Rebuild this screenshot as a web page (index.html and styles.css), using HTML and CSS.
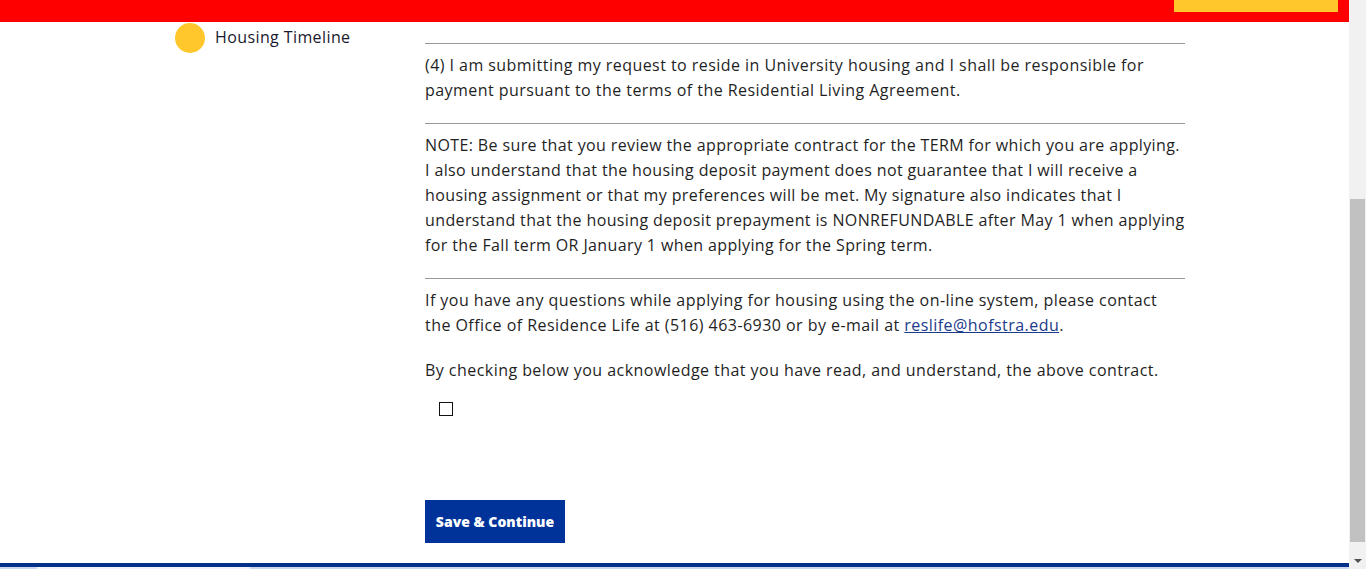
FILE: index.html
```html
<!DOCTYPE html>
<html lang="en">
<head>
<meta charset="utf-8">
<title>Housing Application</title>
<link rel="stylesheet" href="styles.css">
</head>
<body>
<div class="viewport">
  <div class="page">
    <header class="topbar">
      <div class="topbar-btn"></div>
    </header>
    <div class="main">
      <aside class="sidebar">
        <div class="step">
          <span class="dot"></span>
          <span class="step-label">Housing Timeline</span>
        </div>
      </aside>
      <section class="content">
        <hr class="rule">
        <p>(4) I am submitting my request to reside in University housing and I shall be responsible for payment pursuant to the terms of the Residential Living Agreement.</p>
        <hr class="rule">
        <p class="note">NOTE: Be sure that you review the appropriate contract for the TERM for which you are applying. I also understand that the housing deposit payment does not guarantee that I will receive a housing assignment or that my preferences will be met. My signature also indicates that I understand that the housing deposit prepayment is NONREFUNDABLE after May 1 when applying for the Fall term OR January 1 when applying for the Spring term.</p>
        <hr class="rule">
        <p>If you have any questions while applying for housing using the on-line system, please contact the Office of Residence Life at (516) 463-6930 or by e-mail at <a href="#">reslife@hofstra.edu</a>.</p>
        <p>By checking below you acknowledge that you have read, and understand, the above contract.</p>
        <div class="check-row"><span class="checkbox"></span></div>
        <button class="save-btn" type="button">Save &amp; Continue</button>
      </section>
    </div>
    <footer class="footer">
      <div class="footer-band"></div>
      <div class="footer-strip"><span class="footer-box"></span></div>
    </footer>
  </div>
  <div class="scrollbar">
    <div class="scroll-thumb"></div>
    <div class="scroll-arrow"></div>
  </div>
</div>
</body>
</html>
```

FILE: styles.css
```css
html, body {
  margin: 0;
  padding: 0;
  height: 569px;
  overflow: hidden;
  background: #ffffff;
}
body {
  font-family: "Open Sans", "Liberation Sans", sans-serif;
  color: #1f1f1f;
}
.viewport {
  display: flex;
  height: 569px;
}
.page {
  flex: 1;
  display: flex;
  flex-direction: column;
  min-width: 0;
}
.topbar {
  height: 22px;
  background: #ff0000;
  display: flex;
  justify-content: flex-end;
  align-items: flex-start;
  padding-right: 11px;
  flex-shrink: 0;
}
.topbar-btn {
  width: 164px;
  height: 12px;
  background: #ffc72c;
}
.main {
  flex: 1;
  display: flex;
}
.sidebar {
  width: 175px;
  padding-left: 175px;
}
.step {
  display: flex;
  align-items: center;
  gap: 10px;
  margin-top: 1px;
}
.dot {
  width: 30px;
  height: 30px;
  border-radius: 50%;
  background: #ffc72c;
  flex-shrink: 0;
}
.step-label {
  font-size: 16px;
  letter-spacing: 0.4px;
  color: #1a1a2e;
  white-space: nowrap;
  position: relative;
  top: -1px;
}
.content {
  margin-left: 75px;
  width: 760px;
  padding-top: 21px;
  font-size: 16px;
  line-height: 25px;
  letter-spacing: 0.45px;
}
.rule {
  border: 0;
  border-top: 1px solid #999999;
  margin: 0 0 9px 0;
  height: 0;
}
.content p {
  margin: 0 0 20px 0;
}
.content p.note {
  letter-spacing: 0.38px;
}
.content a {
  color: #1b3a8a;
  text-decoration: underline;
}
.check-row {
  padding-left: 14px;
  margin-top: -1px;
  height: 15px;
}
.checkbox {
  display: block;
  width: 12px;
  height: 12px;
  border: 1px solid #111;
  background: #fff;
}
.save-btn {
  margin-top: 83px;
  width: 140px;
  height: 43px;
  background: #00339a;
  color: #ffffff;
  border: 0;
  font-family: "Open Sans", "Liberation Sans", sans-serif;
  font-weight: 800;
  font-size: 14px;
  letter-spacing: 0;
  padding: 0;
}
.footer {
  flex-shrink: 0;
}
.footer-band {
  height: 4px;
  background: #003087;
}
.footer-strip {
  height: 2px;
  background: #c9d8f2;
  padding-left: 37px;
}
.footer-box {
  display: block;
  width: 213px;
  height: 2px;
  background: #eef3fb;
}
.scrollbar {
  width: 17px;
  background: #f1f1f1;
  display: flex;
  flex-direction: column;
  align-items: center;
}
.scroll-thumb {
  margin-top: 199px;
  width: 15px;
  flex: 1;
  background: #c1c1c1;
  margin-bottom: 17px;
}
.scroll-arrow {
  width: 0;
  height: 0;
  border-left: 4px solid transparent;
  border-right: 4px solid transparent;
  border-top: 4px solid #505050;
  margin-bottom: 6px;
}
```
